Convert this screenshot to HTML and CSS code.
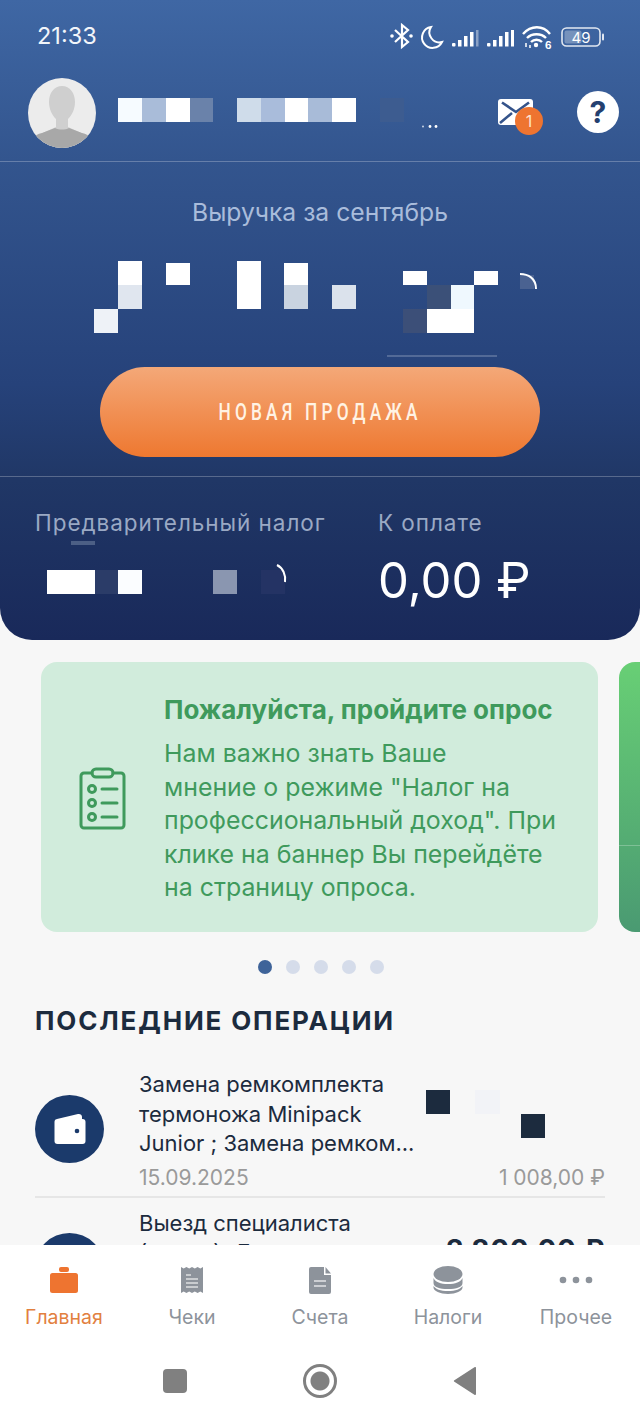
FILE: index.html
```html
<!DOCTYPE html>
<html lang="ru">
<head>
  <meta charset="UTF-8">
  <title>Главная</title>
  <link rel="stylesheet" href="styles.css">
</head>
<body>

  <div class="screen">
    <main class="content">

      <header class="hero">
        <div class="status-bar">
          <span class="time">21:33</span>
          <svg class="status-icons" width="218" height="28" viewBox="388 22 218 28">
            <!-- bluetooth -->
            <path d="M395 30l13 12-6 5V25l6 5-13 12" fill="none" stroke="#fff" stroke-width="2.2"/>
            <circle cx="392" cy="36" r="1.8" fill="#fff"/><circle cx="411" cy="36" r="1.8" fill="#fff"/>
            <!-- moon -->
            <path d="M431 27a10.500 10.500 0 1 0 11 15a10 10 0 0 1-11-15z" fill="none" stroke="#fff" stroke-width="2"/>
            <!-- signal -->
            <g fill="#fff">
              <rect x="452" y="43" width="3.500" height="3.500" rx="1"/><rect x="458" y="40" width="3.500" height="6.500"/><rect x="464" y="36" width="3.500" height="10.500"/><rect x="470" y="32" width="3.500" height="14.500"/>
              <rect x="476" y="30" width="2.500" height="16.500" opacity=".4"/>
              <rect x="487" y="43" width="3.500" height="3.500" rx="1"/><rect x="493" y="40" width="3.500" height="6.500"/><rect x="499" y="36" width="3.500" height="10.500"/><rect x="505" y="32" width="3.500" height="14.500"/><rect x="511" y="30" width="3" height="16.500"/>
            </g>
            <!-- wifi -->
            <g fill="none" stroke="#fff" stroke-width="2.400">
              <path d="M523 34c8-9 20-9 27 0"/><path d="M527 38c5-5 14-5 19 0"/><path d="M531 42c3-3 8-3 11 0"/>
            </g>
            <circle cx="536" cy="45" r="2.200" fill="#fff"/>
            <path d="M526 47v-4M530 48v-3" stroke="#fff" stroke-width="1.500"/>
            <text x="545" y="49" class="wifi-six">6</text>
            <!-- battery -->
            <rect x="562" y="28" width="38" height="18" rx="4.500" fill="none" stroke="#fff" stroke-opacity=".85" stroke-width="1.600"/>
            <rect x="564.500" y="30.500" width="17" height="13" rx="2" fill="#fff" fill-opacity=".3"/>
            <rect x="602" y="33.500" width="2" height="7" rx="1" fill="#fff" fill-opacity=".85"/>
            <text x="581" y="42.500" class="battery-level">49</text>
          </svg>
        </div>

        <div class="profile">
          <svg class="avatar" width="68" height="70" viewBox="0 0 68 70">
            <defs><clipPath id="avatar-clip"><ellipse cx="34" cy="35" rx="34" ry="35"/></clipPath></defs>
            <g clip-path="url(#avatar-clip)">
              <rect width="68" height="70" fill="#ececec"/>
              <path d="M34 8c-8 0-13 7-13 16 0 7 3 13 7 17v8L8 58c-4 2-7 8-7 12h66c0-4-3-10-7-12l-20-9v-8c4-4 7-10 7-17 0-9-5-16-13-16z" fill="#cfcfcf"/>
              <path d="M0 70c1-9 6-13 14-15l13-5c4 2 10 2 14 0l13 5c8 2 13 6 14 15z" fill="#a8a8a8"/>
            </g>
          </svg>
          <svg class="mosaic-name" width="320" height="32" viewBox="118 95 320 32">
            <rect x="118" y="95" width="24" height="24" fill="#f6fbff"/>
            <rect x="142" y="95" width="24" height="24" fill="#a9bcd9"/>
            <rect x="166" y="95" width="24" height="24" fill="#fff"/>
            <rect x="190" y="95" width="23" height="24" fill="#6a82aa"/>
            <rect x="237" y="95" width="24" height="24" fill="#cfdcea"/>
            <rect x="261" y="95" width="24" height="24" fill="#a9bcdb"/>
            <rect x="285" y="95" width="23" height="24" fill="#fff"/>
            <rect x="308" y="95" width="24" height="24" fill="#a8bbd8"/>
            <rect x="332" y="95" width="24" height="24" fill="#fff"/>
            <rect x="380" y="95" width="24" height="24" fill="#3d5c90"/>
            <circle cx="423" cy="123.500" r="1" fill="#c8d4e6"/>
            <circle cx="430" cy="123.500" r="1.400" fill="#fff"/>
            <circle cx="436" cy="123.500" r="1.400" fill="#fff"/>
          </svg>
          <div class="mail">
            <svg width="36" height="28" viewBox="0 0 36 28">
              <rect width="35" height="26" y="1" rx="3" fill="#fff"/>
              <path d="M4 4.500l14 9.500 13-9.500M2 25l12-10" fill="none" stroke="#34538a" stroke-width="2.600"/>
            </svg>
            <span class="mail-badge">1</span>
          </div>
          <div class="help">?</div>
        </div>

        <div class="revenue">
          <div class="revenue-label">Выручка за сентябрь</div>
          <svg class="mosaic-revenue" width="450" height="100" viewBox="94 260 450 100">
            <rect x="118" y="260" width="24" height="24" fill="#fff"/>
            <rect x="118" y="284" width="24" height="24" fill="#e0e6ef"/>
            <rect x="94" y="308" width="24" height="24" fill="#eef2f7"/>
            <rect x="166" y="262" width="24" height="22" fill="#fff"/>
            <rect x="237" y="260" width="24" height="48" fill="#fff"/>
            <rect x="284" y="262" width="24" height="22" fill="#fff"/>
            <rect x="284" y="284" width="24" height="24" fill="#c9d3e0"/>
            <rect x="332" y="284" width="24" height="24" fill="#dbe2ec"/>
            <rect x="403" y="270" width="24" height="14" fill="#fff"/>
            <rect x="427" y="284" width="24" height="24" fill="#3b5078"/>
            <rect x="451" y="284" width="23" height="24" fill="#eff8fe"/>
            <rect x="474" y="270" width="24" height="14" fill="#fff"/>
            <rect x="403" y="308" width="24" height="24" fill="#3c4f78"/>
            <rect x="427" y="308" width="47" height="24" fill="#fff"/>
            <rect x="520" y="274" width="14" height="14" fill="#4a6291"/>
            <path d="M520 273c8 0 16 4 16 15" fill="none" stroke="#fff" stroke-width="2"/>
            <path d="M387 355h110" stroke="#7f90b3" stroke-width="1"/>
          </svg>
          <button class="sale-button"><span>НОВАЯ ПРОДАЖА</span></button>
        </div>

        <div class="taxes">
          <div class="tax-col tax-col-left">
            <div class="tax-label">Предварительный налог</div>
            <svg class="mosaic-tax" width="250" height="54" viewBox="47 540 250 54">
              <rect x="71" y="540" width="24" height="4" fill="#4c5f85"/>
              <rect x="47" y="569" width="48" height="24" fill="#fff"/>
              <rect x="95" y="569" width="23" height="24" fill="#2b3c68"/>
              <rect x="118" y="569" width="24" height="24" fill="#fbfdff"/>
              <rect x="213" y="569" width="24" height="24" fill="#8a96b0"/>
              <rect x="261" y="569" width="24" height="24" fill="#243364"/>
              <path d="M277 564c6 3 9 10 8 17" fill="none" stroke="#fff" stroke-width="2"/>
            </svg>
          </div>
          <div class="tax-col">
            <div class="tax-label">К оплате</div>
            <div class="tax-value">0,00 ₽</div>
          </div>
        </div>
      </header>

      <section class="banners">
        <div class="banner">
          <svg class="banner-icon" width="48" height="64" viewBox="0 0 48 64">
            <g fill="none" stroke="#3f9a5c" stroke-width="3" stroke-linecap="round" stroke-linejoin="round">
              <path d="M13 6H5a3 3 0 0 0-3 3v49a3 3 0 0 0 3 3h37a3 3 0 0 0 3-3V9a3 3 0 0 0-3-3h-8"/>
              <rect x="13" y="2" width="21" height="8" rx="4"/>
              <circle cx="13" cy="22" r="3.500"/><circle cx="13" cy="36" r="3.500"/><circle cx="13" cy="50" r="3.500"/>
              <path d="M23 22h15M23 36h15M23 50h15"/>
            </g>
          </svg>
          <div class="banner-text">
            <div class="banner-title">Пожалуйста, пройдите опрос</div>
            <p class="banner-body">Нам важно знать Ваше<br>мнение о режиме "Налог на<br>профессиональный доход". При<br>клике на баннер Вы перейдёте<br>на страницу опроса.</p>
          </div>
        </div>
        <div class="banner banner-next"></div>
      </section>

      <div class="dots">
        <span class="dot dot-active"></span><span class="dot"></span><span class="dot"></span><span class="dot"></span><span class="dot"></span>
      </div>

      <h2 class="ops-title">ПОСЛЕДНИЕ ОПЕРАЦИИ</h2>

      <div class="op">
        <div class="op-icon">
          <svg width="34" height="32" viewBox="0 0 34 32">
            <path d="M4 6L25 1c2-.4 4 .6 4 3v3H4z" fill="#fff"/>
            <rect x="1.500" y="6" width="31" height="25" rx="3" fill="#fff"/>
            <circle cx="24" cy="18" r="2.300" fill="#1b3a6b"/>
          </svg>
        </div>
        <div class="op-name">Замена ремкомплекта термоножа Minipack Junior ; Замена ремком...</div>
        <svg class="mosaic-op" width="120" height="48" viewBox="426 1090 120 48">
          <rect x="475" y="1090" width="25" height="24" fill="#f2f3f7"/>
          <rect x="426" y="1090" width="24" height="24" fill="#1c2b3e"/>
          <rect x="521" y="1114" width="24" height="24" fill="#1c2b3e"/>
        </svg>
        <div class="op-date">15.09.2025</div>
        <div class="op-sum">1 008,00 ₽</div>
      </div>

      <div class="op op-last">
        <div class="op-icon"></div>
        <div class="op-name">Выезд специалиста (выезд). Доставка</div>
        <div class="op-total">2 800,00 ₽</div>
      </div>
    </main>

    <nav class="tabbar">
      <div class="tabs">
        <div class="tab tab-active">
          <svg width="30" height="28" viewBox="0 0 30 28">
            <rect x="10" y="1" width="10" height="5" rx="2" fill="#ee7430"/>
            <rect x="1" y="7" width="28" height="20" rx="2.500" fill="#ee7430"/>
          </svg>
          <span>Главная</span>
        </div>
        <div class="tab">
          <svg width="30" height="28" viewBox="0 0 30 28">
            <path d="M4 1l2.700 1.500L9.400 1l2.800 1.500L15 1l2.800 1.500L20.600 1l2.700 1.500L26 1v26l-2.700-1.500-2.700 1.500-2.800-1.500L15 27l-2.800-1.500L9.400 27l-2.700-1.500L4 27z" fill="#8d939b"/>
            <path d="M9 9h5M9 13h12M9 17h12M9 21h12" stroke="#fff" stroke-opacity=".7" stroke-width="1.400"/>
          </svg>
          <span>Чеки</span>
        </div>
        <div class="tab">
          <svg width="30" height="28" viewBox="0 0 30 28">
            <path d="M4 3a2 2 0 0 1 2-2h13v8h7v17a2 2 0 0 1-2 2H6a2 2 0 0 1-2-2z" fill="#8d939b"/>
            <path d="M20.500 1L26 7.500h-5.500z" fill="#8d939b"/>
            <path d="M9 15h12M9 20h12" stroke="#fff" stroke-opacity=".75" stroke-width="1.500"/>
          </svg>
          <span>Счета</span>
        </div>
        <div class="tab">
          <svg width="30" height="28" viewBox="0 0 30 28">
            <ellipse cx="15" cy="8" rx="14.500" ry="8" fill="#8d939b"/>
            <path d="M.5 12c2 4 7 6 14.500 6s12.500-2 14.500-6v5c0 4-6 6-14.500 6S.5 21 .5 17z" fill="#8d939b"/>
            <path d="M.5 20c2 3 7 5 14.500 5s12.500-2 14.500-5v1.500C29.500 25 23 28 15 28S.5 25 .5 21.500z" fill="#8d939b"/>
          </svg>
          <span>Налоги</span>
        </div>
        <div class="tab">
          <svg width="36" height="28" viewBox="0 0 36 28">
            <circle cx="5" cy="14" r="3.300" fill="#8d939b"/><circle cx="18" cy="14" r="3.300" fill="#8d939b"/><circle cx="31" cy="14" r="3.300" fill="#8d939b"/>
          </svg>
          <span>Прочее</span>
        </div>
      </div>
      <div class="system-nav">
        <span class="nav-square"></span>
        <span class="nav-circle"></span>
        <svg width="24" height="30" viewBox="0 0 24 30"><path d="M23 2v26a1 1 0 0 1-1.600.8L1 15.500a1 1 0 0 1 0-1L21.400 1.200A1 1 0 0 1 23 2z" fill="#808080"/></svg>
      </div>
    </nav>
  </div>

</body>
</html>
```

FILE: styles.css
```css
* {
  box-sizing: border-box;
}

body {
  margin: 0;
  background: #f7f7f7;
  font-family: Inter, Roboto, "Noto Sans", sans-serif;
}

.screen {
  width: 640px;
  height: 1424px;
  display: flex;
  flex-direction: column;
  overflow: hidden;
}

.content {
  flex: 1;
  min-height: 0;
  overflow: hidden;
}

/* Синий блок сверху */
.hero {
  height: 640px;
  border-radius: 0 0 32px 32px;
  background: linear-gradient(to bottom, #3f67a4, #33558e 25%, #26427a 60%, #203766 75%, #19295a);
  color: #fff;
}

.status-bar {
  height: 78px;
  padding: 22px 34px 0 37px;
  display: flex;
  justify-content: space-between;
  align-items: flex-start;
}

.time {
  font-size: 23.5px;
  line-height: 28px;
  font-weight: 400;
  color: #f2f5fa;
}

.status-icons {
  display: block;
}

.wifi-six {
  font-size: 10px;
  font-weight: 700;
  fill: #fff;
}

.battery-level {
  font-size: 15px;
  fill: #fff;
  text-anchor: middle;
}

.profile {
  height: 84px;
  padding: 0 21px 14px 28px;
  display: flex;
  align-items: center;
  border-bottom: 1px solid rgba(255, 255, 255, 0.25);
}

.avatar {
  flex: none;
  display: block;
}

.mosaic-name {
  flex: none;
  margin-left: 22px;
  margin-top: 2px;
}

.mail {
  position: relative;
  margin-left: 60px;
  margin-top: -1px;
  width: 36px;
  height: 28px;
}

.mail svg {
  display: block;
}

.mail-badge {
  position: absolute;
  left: 17px;
  top: 9px;
  width: 28px;
  height: 28px;
  border-radius: 50%;
  background: #ee7430;
  color: #fde3cf;
  font-size: 16px;
  line-height: 28px;
  text-align: center;
}

.help {
  flex: none;
  width: 42px;
  height: 42px;
  margin-left: 43px;
  margin-top: -2px;
  border-radius: 50%;
  background: #fff;
  color: #24406f;
  font-size: 30px;
  font-weight: 700;
  line-height: 42px;
  text-align: center;
}

.revenue {
  height: 315px;
  padding-top: 34px;
  border-bottom: 1px solid rgba(255, 255, 255, 0.25);
  text-align: center;
}

.revenue-label {
  height: 32px;
  font-size: 24.7px;
  line-height: 32px;
  color: #a9bcdb;
}

.mosaic-revenue {
  display: block;
  margin: 33px 0 6px 94px;
}

.sale-button {
  display: block;
  width: 440px;
  height: 90px;
  margin: 0 auto;
  border: none;
  border-radius: 45px;
  background: linear-gradient(to bottom, #f4a878, #ee7830);
  color: #fff3e4;
  font-family: Roboto, sans-serif;
  font-size: 24px;
  font-weight: 500;
}

/* буквы на кнопке узкие и с большим разрядом */
.sale-button span {
  display: inline-block;
  letter-spacing: 5.8px;
  white-space: nowrap;
  transform: scaleX(0.72);
}

.taxes {
  display: flex;
  padding: 31px 0 0 35px;
}

.tax-col-left {
  width: 343px;
}

.tax-label {
  font-size: 22.5px;
  line-height: 30px;
  letter-spacing: 0.95px;
  color: #9aa9c4;
}

.mosaic-tax {
  display: block;
  margin: 3px 0 0 12px;
}

.tax-value {
  margin-top: 13px;
  font-size: 49px;
  line-height: 60px;
}

/* Баннеры */
.banners {
  display: flex;
  gap: 21px;
  padding: 22px 0 0 41px;
  width: 640px;
  overflow: hidden;
}

.banner {
  flex: none;
  width: 557px;
  height: 270px;
  display: flex;
  border-radius: 16px;
  background: #d1ecdc;
}

.banner-next {
  background:
    linear-gradient(to bottom, transparent 183px, rgba(255, 255, 255, 0.25) 183px, rgba(255, 255, 255, 0.25) 184px, transparent 184px),
    linear-gradient(to bottom, #68cf75, #4a9a72);
}

.banner-icon {
  flex: none;
  margin: 105px 0 0 38px;
}

.banner-text {
  margin-left: 37px;
  padding-top: 31px;
  color: #3f9a5c;
  white-space: nowrap;
}

.banner-title {
  font-size: 26px;
  line-height: 34px;
  font-weight: 700;
}

.banner-body {
  margin: 10px 0 0;
  font-size: 24.9px;
  line-height: 33.5px;
}

.dots {
  display: flex;
  gap: 14px;
  margin: 28px 0 0 258px;
}

.dot {
  width: 14px;
  height: 14px;
  border-radius: 50%;
  background: #d5dcea;
}

.dot-active {
  background: #3e6399;
}

.ops-title {
  margin: 30px 0 0 35px;
  font-size: 26px;
  line-height: 34px;
  font-weight: 700;
  letter-spacing: 1.85px;
  color: #1c2b3e;
}

/* Список операций */
.op {
  display: grid;
  grid-template-columns: 104px 287px 1fr;
  margin: 32px 35px 0;
  padding-bottom: 5px;
  border-bottom: 2px solid #e6e6e6;
}

.op-icon {
  grid-row: 1 / span 2;
  width: 69px;
  height: 68px;
  margin-top: 25px;
  display: flex;
  align-items: center;
  justify-content: center;
  border-radius: 50%;
  background: #1b3a6b;
}

.op-name {
  font-size: 22px;
  line-height: 29.5px;
  color: #1c2b3e;
}

.mosaic-op {
  justify-self: start;
  margin-top: 20px;
}

.op-date,
.op-sum {
  margin-top: 6px;
  font-size: 21px;
  line-height: 26px;
  color: #9a9a9a;
}

.op-sum {
  text-align: right;
}

.op-last {
  margin-top: 11px;
  border-bottom: none;
}

.op-last .op-icon {
  margin-top: 24px;
}

.op-total {
  margin-top: 24px;
  font-size: 28px;
  font-weight: 700;
  letter-spacing: 0.6px;
  text-align: right;
  color: #1c2b3e;
}

/* Нижнее меню */
.tabbar {
  flex: none;
  height: 179px;
  background: #fff;
}

.tabs {
  display: grid;
  grid-template-columns: repeat(5, 128px);
  padding-top: 21px;
}

.tab {
  display: flex;
  flex-direction: column;
  align-items: center;
  color: #8d939b;
  font-size: 19.5px;
  line-height: 26px;
}

.tab span {
  margin-top: 10px;
}

.tab-active {
  color: #e2803f;
}

.system-nav {
  display: flex;
  align-items: center;
  justify-content: space-between;
  width: 314px;
  margin: 34px 0 0 163px;
}

.nav-square {
  width: 24px;
  height: 24px;
  border-radius: 4px;
  background: #808080;
}

.nav-circle {
  width: 34px;
  height: 34px;
  border: 3px solid #808080;
  border-radius: 50%;
  background: radial-gradient(circle, #808080 0 9px, #fff 10px);
}
```
